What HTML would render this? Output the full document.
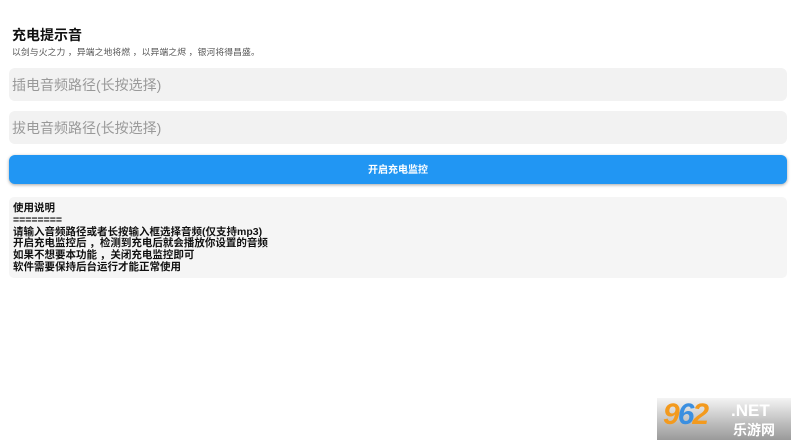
<!DOCTYPE html>
<html><head><meta charset="utf-8"><style>
body{margin:0;width:796px;height:447px;background:#fff;font-family:"Liberation Sans","Noto Sans CJK SC",sans-serif;position:relative;overflow:hidden}
.t{position:absolute;left:12px;top:25px;font-size:14px;font-weight:bold;color:#111}
.s{position:absolute;left:12px;top:45px;font-size:8.8px;color:#555;letter-spacing:0.1px}
.in{position:absolute;left:9px;width:778px;height:33px;background:#f2f2f2;border-radius:6px;color:#999;font-size:14px;line-height:35px;padding-left:3px;box-sizing:border-box}
.btn{position:absolute;left:9px;top:155px;width:778px;height:29px;background:#2196F3;border-radius:6px;box-shadow:0 1px 3px rgba(0,0,0,.35);color:#fff;font-size:10px;font-weight:bold;text-align:center;line-height:31px}
.info{position:absolute;left:9px;top:197px;width:778px;height:81px;background:#f5f5f5;border-radius:5px;font-size:10.5px;font-weight:bold;line-height:11.8px;color:#111;padding:6px 0 0 4px;box-sizing:border-box}
.wm{position:absolute;left:657px;top:398px;width:134px;height:42px;background:linear-gradient(#f4f4f4,#bdbdbd 60%,#9a9a9a)}
</style></head><body>
<div class="t">充电提示音</div>
<div class="s">以剑与火之力 ，异端之地将燃 ，以异端之烬 ，银河将得昌盛。</div>
<div class="in" style="top:68px">插电音频路径(长按选择)</div>
<div class="in" style="top:111px">拔电音频路径(长按选择)</div>
<div class="btn">开启充电监控</div>
<div class="info">使用说明<br>========<br>请输入音频路径或者长按输入框选择音频(仅支持mp3)<br>开启充电监控后 ，检测到充电后就会播放你设置的音频<br>如果不想要本功能 ，关闭充电监控即可<br>软件需要保持后台运行才能正常使用</div>
<div class="wm">
<span style="position:absolute;left:6px;top:0;font:italic bold 30px 'Liberation Sans';color:#f39a1e;letter-spacing:-2px">9<span style="color:#3b8fe0">6</span>2</span>
<span style="position:absolute;left:74px;top:3px;font:bold 17px 'Liberation Sans';color:#fff">.NET</span>
<span style="position:absolute;left:76px;top:22px;font-size:14px;font-weight:bold;color:#fff;font-family:'Noto Sans CJK SC',sans-serif">乐游网</span>
</div>
</body></html>
